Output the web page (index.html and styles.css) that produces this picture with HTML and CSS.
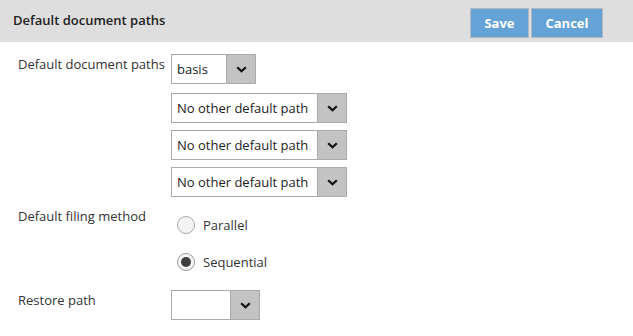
FILE: index.html
```html
<!DOCTYPE html>
<html lang="en">
<head>
<meta charset="utf-8">
<title>Default document paths</title>
<link rel="stylesheet" href="styles.css">
</head>
<body>
<div class="panel">
  <header class="toolbar">
    <h1 class="title">Default document paths</h1>
    <div class="actions">
      <button class="btn btn-save" type="button">Save</button>
      <button class="btn btn-cancel" type="button">Cancel</button>
    </div>
  </header>
  <form class="form">
    <div class="row row-paths">
      <div class="label">Default document paths</div>
      <div class="controls stack">
        <div class="select select-basis">
          <span class="value">basis</span>
          <span class="arrow"><svg width="11" height="7" viewBox="0 0 11 7"><path d="M1.2 1.2 L5.5 5.3 L9.8 1.2" fill="none" stroke="#111" stroke-width="2.2"/></svg></span>
        </div>
        <div class="select select-wide">
          <span class="value">No other default path</span>
          <span class="arrow"><svg width="11" height="7" viewBox="0 0 11 7"><path d="M1.2 1.2 L5.5 5.3 L9.8 1.2" fill="none" stroke="#111" stroke-width="2.2"/></svg></span>
        </div>
        <div class="select select-wide">
          <span class="value">No other default path</span>
          <span class="arrow"><svg width="11" height="7" viewBox="0 0 11 7"><path d="M1.2 1.2 L5.5 5.3 L9.8 1.2" fill="none" stroke="#111" stroke-width="2.2"/></svg></span>
        </div>
        <div class="select select-wide">
          <span class="value">No other default path</span>
          <span class="arrow"><svg width="11" height="7" viewBox="0 0 11 7"><path d="M1.2 1.2 L5.5 5.3 L9.8 1.2" fill="none" stroke="#111" stroke-width="2.2"/></svg></span>
        </div>
      </div>
    </div>
    <div class="row row-filing">
      <div class="label">Default filing method</div>
      <div class="controls radios">
        <div class="radio-item">
          <span class="radio"></span>
          <span class="radio-text">Parallel</span>
        </div>
        <div class="radio-item">
          <span class="radio radio-checked"><span class="dot"></span></span>
          <span class="radio-text">Sequential</span>
        </div>
      </div>
    </div>
    <div class="row row-restore">
      <div class="label">Restore path</div>
      <div class="controls">
        <div class="select select-restore">
          <span class="value"></span>
          <span class="arrow"><svg width="11" height="7" viewBox="0 0 11 7"><path d="M1.2 1.2 L5.5 5.3 L9.8 1.2" fill="none" stroke="#111" stroke-width="2.2"/></svg></span>
        </div>
      </div>
    </div>
  </form>
</div>
</body>
</html>
```
FILE: styles.css
```css
html, body {
  margin: 0;
  padding: 0;
  background: #ffffff;
}
body {
  font-family: "Open Sans", "Noto Sans", "Liberation Sans", sans-serif;
  font-size: 13px;
  color: #333333;
}
.panel {
  width: 633px;
}
.toolbar {
  height: 42px;
  background: #dedede;
  display: flex;
  align-items: flex-start;
  justify-content: space-between;
  padding: 0 30px 0 13px;
  box-sizing: border-box;
}
.title {
  margin: 0;
  padding-top: 11px;
  font-size: 13px;
  font-weight: 600;
  line-height: 18px;
  color: #222222;
}
.actions {
  display: flex;
  gap: 2px;
  padding-top: 8px;
}
.btn {
  height: 30px;
  margin: 0;
  padding: 0;
  border: 1px solid #b3b9bf;
  background: #65a2d5;
  color: #ffffff;
  font-family: inherit;
  font-size: 13px;
  font-weight: 700;
  box-sizing: border-box;
}
.btn-save { width: 59px; }
.btn-cancel { width: 72px; }
.form {
  padding: 12px 0 0 18px;
}
.row {
  display: flex;
  align-items: flex-start;
}
.label {
  width: 153px;
  flex: none;
  line-height: 18px;
  padding-top: 1px;
  color: #333333;
}
.row-filing { margin-top: 9px; }
.row-restore { margin-top: 13px; }
.stack {
  display: flex;
  flex-direction: column;
  gap: 7px;
}
.select-basis { margin-bottom: 2px; }
.select {
  display: flex;
  height: 30px;
  border: 1px solid #aaaaaa;
  background: #ffffff;
  box-sizing: border-box;
}
.select-basis { width: 85px; }
.select-wide { width: 176px; }
.select-restore { width: 89px; }
.value {
  flex: 1;
  padding-left: 5px;
  line-height: 28px;
  color: #222222;
  white-space: nowrap;
  overflow: hidden;
}
.arrow {
  width: 28px;
  flex: none;
  background: #c3c3c3;
  border-left: 1px solid #aaaaaa;
  display: flex;
  align-items: center;
  justify-content: center;
}
.radios {
  display: flex;
  flex-direction: column;
  gap: 7px;
  margin-top: 4px;
}
.radio-item {
  display: flex;
  align-items: center;
  height: 30px;
  padding-left: 6px;
  gap: 8px;
}
.radio {
  width: 18px;
  height: 18px;
  border-radius: 50%;
  border: 1px solid #aaaaaa;
  background: #f3f3f3;
  box-sizing: border-box;
  display: flex;
  align-items: center;
  justify-content: center;
}
.radio-checked {
  background: #f6f6f6;
  border-color: #9a9a9a;
}
.dot {
  width: 10px;
  height: 10px;
  border-radius: 50%;
  background: #3e3e3e;
}
.radio-text {
  color: #333333;
}
```
